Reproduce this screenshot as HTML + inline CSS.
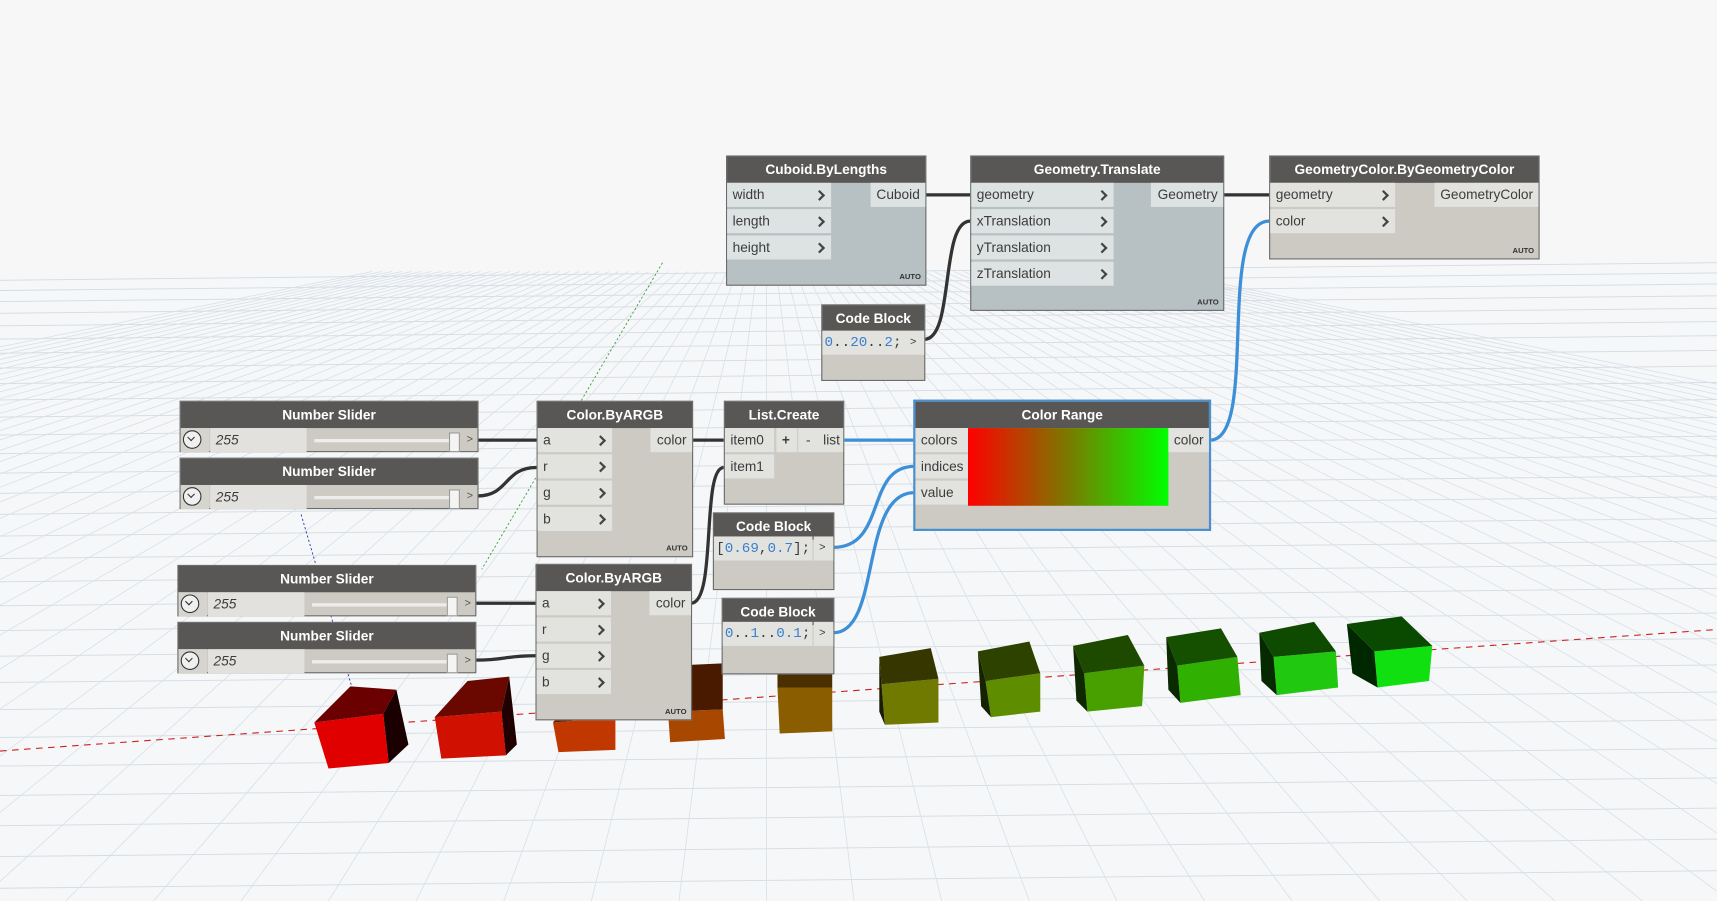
<!DOCTYPE html>
<html><head><meta charset="utf-8">
<style>
html,body{margin:0;padding:0;width:1717px;height:901px;overflow:hidden;background:#f7f7f7}
#w{position:absolute;left:0;top:0;width:1568px;height:823px;transform:scale(1.09503,1.09478);transform-origin:0 0;font-family:"Liberation Sans","DejaVu Sans",sans-serif}
svg{position:absolute;left:0;top:0}
.node{position:absolute;background:#cdcac4;border:1px solid #6b6b6b;box-sizing:border-box}
.node.g{background:#b7c0c3}
.hd{position:absolute;left:0;right:0;top:0;height:24px;background:#595755;color:#fff;font-weight:bold;font-size:12.5px;text-align:center;line-height:24px}
.r{position:absolute;height:22px;line-height:22px;font-size:12.5px;color:#3c3c3c;background:#e2e2df;padding-left:5px;box-sizing:border-box}
.g .r{background:#dde2e3}
.o{text-align:right;padding:0 5px}
.ch{position:absolute;right:7px;top:8px;width:5px;height:5px;border-right:2px solid #444;border-top:2px solid #444;transform:rotate(45deg)}
.auto{position:absolute;right:4px;bottom:3px;font-size:7px;font-weight:bold;color:#333}
.code{font-family:"Liberation Mono",monospace;font-size:13px;color:#3a3a3a}
.code b{color:#3a7fd0;font-weight:normal}
.sl .r{background:#d6d4cf}
.btn{position:absolute;left:2px;top:2px;width:17px;height:17px;border-radius:50%;border:1.3px solid #333;background:#f0f0f0;box-sizing:border-box}
.btn:after{content:"";position:absolute;left:4px;top:3px;width:4px;height:4px;border-right:1.6px solid #333;border-bottom:1.6px solid #333;transform:rotate(45deg)}
</style></head><body>
<div id="w">
<svg id="grid" width="1568" height="823"></svg>
<svg width="1568" height="823">
<line x1="0" y1="686" x2="1568" y2="575" stroke="#cc2020" stroke-width="1" stroke-dasharray="6,5"/>
<line x1="605" y1="240" x2="440" y2="520" stroke="#3a9a3a" stroke-width="0.8" stroke-dasharray="2,2"/>
<line x1="275" y1="470" x2="325" y2="640" stroke="#2233aa" stroke-width="0.8" stroke-dasharray="2,2"/>
<g id="cubes"></g>
</svg>
<svg width="1568" height="823" style="z-index:1" fill="none">
<g stroke="#333" stroke-width="3">
<path d="M845,178 L886,178"/><path d="M1117,178 L1159,178"/>
<path d="M844,310 C872,310 858,202 886,202"/>
<path d="M436,402 L490,402"/><path d="M436,453 C465,453 460,427 490,427"/>
<path d="M434,551 L489,551"/><path d="M434,603 C462,603 460,599 489,599"/>
<path d="M632,402 L661,402"/><path d="M631,551 C655,551 640,427 661,427"/>
</g>
<g stroke="#3d8fd8" stroke-width="3">
<path d="M1105,402 C1150,402 1110,202 1159,202"/>
<path d="M770,402 L835,402"/>
<path d="M761,500 C810,500 790,426 835,426"/>
<path d="M761,578 C805,578 785,450 835,450"/>
</g>
</svg>
<div style="position:absolute;left:0;top:0;z-index:2">
<div class="node g" style="left:663px;top:142px;width:183px;height:119px"><div class="hd">Cuboid.ByLengths</div>
<div class="r" style="left:0;top:24px;width:95px">width<i class="ch"></i></div>
<div class="r" style="left:0;top:48px;width:95px">length<i class="ch"></i></div>
<div class="r" style="left:0;top:72px;width:95px">height<i class="ch"></i></div>
<div class="r o" style="right:0;top:24px;width:50px">Cuboid</div><div class="auto">AUTO</div></div>
<div class="node g" style="left:886px;top:142px;width:232px;height:142px"><div class="hd">Geometry.Translate</div>
<div class="r" style="left:0;top:24px;width:130px">geometry<i class="ch"></i></div>
<div class="r" style="left:0;top:48px;width:130px">xTranslation<i class="ch"></i></div>
<div class="r" style="left:0;top:72px;width:130px">yTranslation<i class="ch"></i></div>
<div class="r" style="left:0;top:96px;width:130px">zTranslation<i class="ch"></i></div>
<div class="r o" style="right:0;top:24px;width:66px">Geometry</div><div class="auto">AUTO</div></div>
<div class="node" style="left:1159px;top:142px;width:247px;height:95px"><div class="hd">GeometryColor.ByGeometryColor</div>
<div class="r" style="left:0;top:24px;width:114px">geometry<i class="ch"></i></div>
<div class="r" style="left:0;top:48px;width:114px">color<i class="ch"></i></div>
<div class="r o" style="right:0;top:24px;width:95px">GeometryColor</div><div class="auto">AUTO</div></div>
<div class="node" style="left:750px;top:278px;width:95px;height:70px"><div class="hd">Code Block</div>
<div class="r code" style="left:0;top:23px;width:75px;padding-left:2px"><b>0</b>..<b>20</b>..<b>2</b>;</div>
<div class="r" style="right:0;top:23px;width:18px;font-size:10px;padding-left:5px">&gt;</div></div>
<div class="node sl" style="left:164px;top:366px;width:273px;height:47px"><div class="hd">Number Slider</div>
<div class="r" style="left:0;top:24px;width:26px"><span class="btn"></span></div>
<div class="r" style="left:27px;top:24px;width:88px;background:#e2e1de;font-style:italic">255</div>
<div style="position:absolute;left:122px;top:34px;width:130px;height:3px;background:#eeedeb"></div>
<div style="position:absolute;left:245px;top:28px;width:8px;height:16px;background:#f4f4f2;border:1px solid #999"></div>
<div style="position:absolute;right:4px;top:24px;font-size:10px;line-height:22px;color:#555">&gt;</div></div>
<div class="node sl" style="left:164px;top:418px;width:273px;height:47px"><div class="hd">Number Slider</div>
<div class="r" style="left:0;top:24px;width:26px"><span class="btn"></span></div>
<div class="r" style="left:27px;top:24px;width:88px;background:#e2e1de;font-style:italic">255</div>
<div style="position:absolute;left:122px;top:34px;width:130px;height:3px;background:#eeedeb"></div>
<div style="position:absolute;left:245px;top:28px;width:8px;height:16px;background:#f4f4f2;border:1px solid #999"></div>
<div style="position:absolute;right:4px;top:24px;font-size:10px;line-height:22px;color:#555">&gt;</div></div>
<div class="node sl" style="left:162px;top:516px;width:273px;height:47px"><div class="hd">Number Slider</div>
<div class="r" style="left:0;top:24px;width:26px"><span class="btn"></span></div>
<div class="r" style="left:27px;top:24px;width:88px;background:#e2e1de;font-style:italic">255</div>
<div style="position:absolute;left:122px;top:34px;width:130px;height:3px;background:#eeedeb"></div>
<div style="position:absolute;left:245px;top:28px;width:8px;height:16px;background:#f4f4f2;border:1px solid #999"></div>
<div style="position:absolute;right:4px;top:24px;font-size:10px;line-height:22px;color:#555">&gt;</div></div>
<div class="node sl" style="left:162px;top:568px;width:273px;height:47px"><div class="hd">Number Slider</div>
<div class="r" style="left:0;top:24px;width:26px"><span class="btn"></span></div>
<div class="r" style="left:27px;top:24px;width:88px;background:#e2e1de;font-style:italic">255</div>
<div style="position:absolute;left:122px;top:34px;width:130px;height:3px;background:#eeedeb"></div>
<div style="position:absolute;left:245px;top:28px;width:8px;height:16px;background:#f4f4f2;border:1px solid #999"></div>
<div style="position:absolute;right:4px;top:24px;font-size:10px;line-height:22px;color:#555">&gt;</div></div>
<div class="node" style="left:490px;top:366px;width:143px;height:143px"><div class="hd">Color.ByARGB</div>
<div class="r" style="left:0;top:24px;width:68px">a<i class="ch"></i></div>
<div class="r" style="left:0;top:48px;width:68px">r<i class="ch"></i></div>
<div class="r" style="left:0;top:72px;width:68px">g<i class="ch"></i></div>
<div class="r" style="left:0;top:96px;width:68px">b<i class="ch"></i></div>
<div class="r o" style="right:0;top:24px;width:38px">color</div><div class="auto">AUTO</div></div>
<div class="node" style="left:489px;top:515px;width:143px;height:143px"><div class="hd">Color.ByARGB</div>
<div class="r" style="left:0;top:24px;width:68px">a<i class="ch"></i></div>
<div class="r" style="left:0;top:48px;width:68px">r<i class="ch"></i></div>
<div class="r" style="left:0;top:72px;width:68px">g<i class="ch"></i></div>
<div class="r" style="left:0;top:96px;width:68px">b<i class="ch"></i></div>
<div class="r o" style="right:0;top:24px;width:38px">color</div><div class="auto">AUTO</div></div>
<div class="node" style="left:661px;top:366px;width:110px;height:95px"><div class="hd">List.Create</div>
<div class="r" style="left:0;top:24px;width:45px">item0</div>
<div class="r" style="left:0;top:48px;width:45px">item1</div>
<div class="r" style="left:47px;top:24px;width:19px;padding-left:5px;font-weight:bold">+</div>
<div class="r" style="left:67px;top:24px;width:19px;padding-left:7px">-</div>
<div class="r o" style="right:0;top:24px;width:24px;padding:0 3px 0 0">list</div></div>
<div class="node" style="left:651px;top:468px;width:111px;height:71px"><div class="hd">Code Block</div>
<div class="r code" style="left:0;top:21px;width:90px;padding-left:2px">[<b>0.69</b>,<b>0.7</b>];</div>
<div class="r" style="right:0;top:21px;width:18px;font-size:10px;padding-left:5px">&gt;</div></div>
<div class="node" style="left:659px;top:546px;width:103px;height:70px"><div class="hd">Code Block</div>
<div class="r code" style="left:0;top:21px;width:82px;padding-left:2px"><b>0</b>..<b>1</b>..<b>0.1</b>;</div>
<div class="r" style="right:0;top:21px;width:18px;font-size:10px;padding-left:5px">&gt;</div></div>
<div class="node" style="left:834px;top:365px;width:272px;height:120px;border:2px solid #4a8fd0"><div class="hd">Color Range</div>
<div class="r" style="left:0;top:24px;width:48px">colors</div>
<div class="r" style="left:0;top:48px;width:48px">indices</div>
<div class="r" style="left:0;top:72px;width:48px">value</div>
<div style="position:absolute;left:48px;top:24px;width:183px;height:71px;background:linear-gradient(90deg,#ff0000,#7a7a00 50%,#00ff00)"></div>
<div class="r o" style="right:0;top:24px;width:37px">color</div></div>
</div>
</div>
<script>
var g=document.getElementById('grid'),s='';
for(var i=0;i<40;i++){var y=248+i*9+i*i*0.35;if(y>823)break;s+='<line x1="0" y1="'+(y+8)+'" x2="1568" y2="'+(y-8)+'" stroke="#d3dbe3" stroke-width="0.8"/>';}
for(var k=-40;k<=40;k++){s+='<line x1="'+(700+k*9)+'" y1="248" x2="'+(700+k*80)+'" y2="823" stroke="#d8dfe6" stroke-width="0.7"/>';}
g.innerHTML='<rect x="0" y="245" width="1568" height="578" fill="#f5f7f8"/>'+s;
var C=[
[['287,660 350,652 355,697 300,702','#e00000'],['287,660 320,627 362,630 350,652','#6a0000'],['350,652 362,630 373,680 355,697','#1a0000']],
[['397,655 458,650 462,690 403,693','#d01000'],['397,655 427,622 465,618 458,650','#6a0800'],['458,650 465,618 472,680 462,690','#200000']],
[['505,660 562,655 562,685 510,687','#c03800'],['505,660 530,630 565,628 562,655','#5a1a00']],
[['610,650 660,648 662,675 612,678','#a84800'],['610,650 615,608 660,606 660,648','#4a1a00']],
[['710,628 760,628 760,668 712,670','#8a5e00'],['710,628 710,600 760,600 760,628','#4a3000']],
[['805,625 857,620 857,660 808,662','#707a00'],['803,600 850,592 857,620 805,625','#363600'],['803,600 805,625 808,662 803,650','#1c1c00']],
[['900,622 950,615 950,650 905,655','#5e8e00'],['893,595 940,586 950,615 900,622','#2e4200'],['893,595 900,622 905,655 896,645','#162200']],
[['990,615 1045,608 1043,645 993,650','#48a000'],['980,590 1030,580 1045,608 990,615','#1e4a00'],['980,590 990,615 993,650 983,640','#0e2800']],
[['1075,608 1130,600 1133,635 1078,642','#30b000'],['1065,582 1115,574 1130,600 1075,608','#145000'],['1065,582 1075,608 1078,642 1067,630','#0a2a00']],
[['1163,600 1220,595 1222,628 1166,635','#20c810'],['1150,578 1200,568 1220,595 1163,600','#0e4a00'],['1150,578 1163,600 1166,635 1152,622','#062a00']],
[['1255,595 1308,590 1305,622 1258,628','#10e010'],['1230,570 1280,563 1308,590 1255,595','#0a4a00'],['1230,570 1255,595 1258,628 1235,615','#002800']]];
var h='';C.forEach(function(c){c.forEach(function(p){h+='<polygon points="'+p[0]+'" fill="'+p[1]+'"/>';});});
document.getElementById('cubes').innerHTML=h;
</script>
</body></html>
